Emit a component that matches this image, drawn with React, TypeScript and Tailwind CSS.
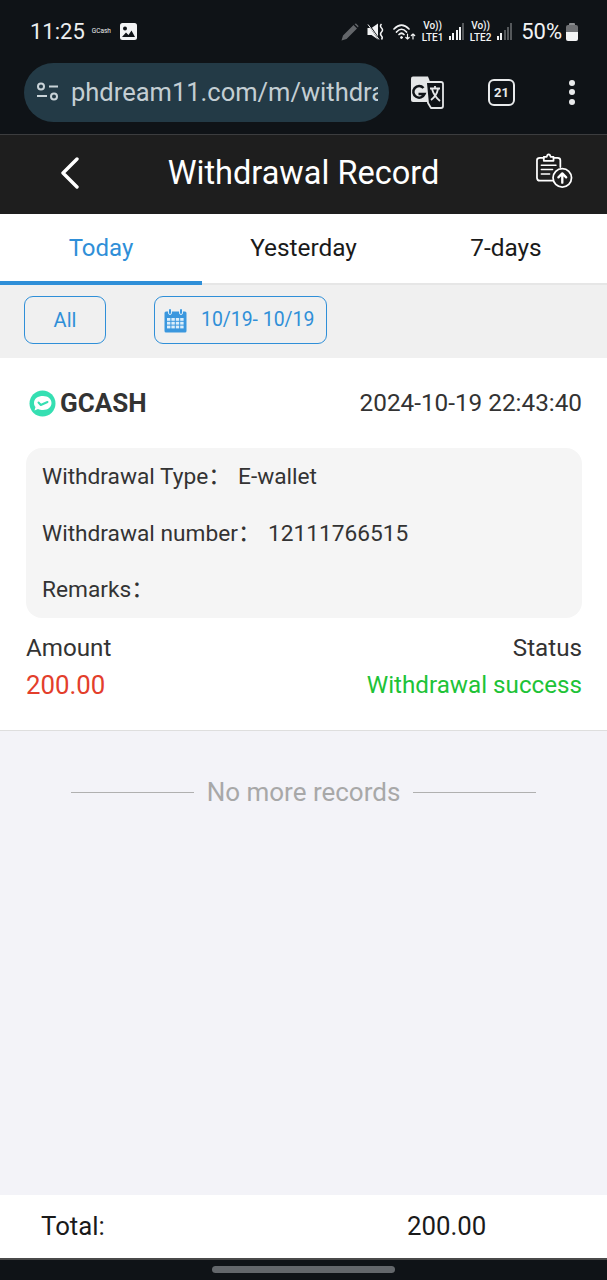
function SignalBars({ level }: { level: number }) {
  const heights = [4, 7, 10, 13, 17];
  return (
    <div className="flex items-end gap-[1.25px] h-[17px]">
      {heights.map((h, i) => (
        <div
          key={i}
          className="w-[2px]"
          style={{ height: h, backgroundColor: i < level ? '#f2f3f4' : '#55585b' }}
        ></div>
      ))}
    </div>
  );
}

function SimTag({ label }: { label: string }) {
  return (
    <div className="flex flex-col items-center text-[10px] leading-[11.5px] font-medium w-[23px] whitespace-nowrap">
      <span>Vo))</span>
      <span>{label}</span>
    </div>
  );
}

function StatusIcons() {
  return (
    <div className="flex items-center text-[#f2f3f4]">
      <svg width="18" height="18" viewBox="0 0 18 18" className="text-[#63666a]">
        <path d="M0.5 17.5 L2 12.5 L12.5 2 L16 5.5 L5.5 16 Z M13.5 1 L15 0.5 L17.5 3 L17 4.5 Z" fill="currentColor" />
      </svg>
      <svg width="18" height="17" viewBox="0 0 18 17" className="ml-[8px]">
        <path d="M0.5 5 H4.5 L11 0.5 V16.5 L4.5 12 H0.5 Z" fill="currentColor" />
        <path d="M1 0.5 L11.5 15.5" stroke="#0f1317" strokeWidth="1.6" />
        <path d="M1 1.5 L12 16.5" stroke="currentColor" strokeWidth="1" />
        <path d="M14.5 1 Q12.5 3 14.5 5 Q16.5 7 14.5 9 Q12.5 11 14.5 13 Q16 14.5 14.5 16.5" stroke="currentColor" strokeWidth="1.5" fill="none" />
      </svg>
      <svg width="23" height="17" viewBox="0 0 23 17" fill="none" stroke="currentColor" strokeLinecap="round" className="ml-[8px]">
        <path d="M1 6 Q8.5 -1.5 16 6" strokeWidth="1.7" />
        <path d="M3.5 9 Q8.5 3.5 13.5 9" strokeWidth="1.7" />
        <path d="M6 11.5 Q8.5 9 11 11.5" strokeWidth="1.7" />
        <circle cx="8.5" cy="14.5" r="1" fill="currentColor" />
        <path d="M14.5 11 V16 M12.8 14.5 L14.5 16 L16.2 14.5" strokeWidth="1.2" />
        <path d="M20 16 V11 M18.3 12.5 L20 11 L21.7 12.5" strokeWidth="1.2" />
      </svg>
      <div className="ml-[5px]"><SimTag label="LTE1" /></div>
      <div className="ml-[5px]"><SignalBars level={4} /></div>
      <div className="ml-[5px]"><SimTag label="LTE2" /></div>
      <div className="ml-[5px]"><SignalBars level={2} /></div>
      <span className="text-[22px] leading-none ml-[9px]">50%</span>
      <div className="flex flex-col items-center ml-[4px]">
        <div className="w-[6px] h-[2px] bg-[#8b8d90] rounded-t-[1px]"></div>
        <div className="w-[12px] h-[16px] rounded-[2px] overflow-hidden flex flex-col">
          <div className="h-[7px] bg-[#6f7174]"></div>
          <div className="h-[9px] bg-[#f2f3f4]"></div>
        </div>
      </div>
    </div>
  );
}

function TranslateIcon() {
  return (
    <svg width="34" height="33" viewBox="0 0 34 33">
      <path d="M3 0.5 H18 L28 26 H3 Q1 26 1 24 V2.5 Q1 0.5 3 0.5 Z" fill="#e4e6e7" />
      <path d="M18 27 L21 32 H31 Q33 32 33 30 V8 Q33 6 31 6 H16 Z" fill="#0f1317" stroke="#e4e6e7" strokeWidth="1.8" strokeLinejoin="round" />
      <path d="M13.5 12 A5.8 5.8 0 1 0 14.5 18 H8.5" fill="none" stroke="#0f1317" strokeWidth="2.5" />
      <path d="M20 12.5 H30 M25 10 V12.5 M22 13 Q24 20 30 25 M28 13 Q26.5 20 21 24" fill="none" stroke="#e4e6e7" strokeWidth="1.8" />
    </svg>
  );
}

function ClipboardUploadIcon() {
  return (
    <svg width="37" height="36" viewBox="0 0 38 36" fill="none" stroke="white" strokeWidth="1.8" strokeLinecap="round" strokeLinejoin="round">
      <path d="M17 28 H4 Q1 28 1 25 V7 Q1 4.5 4 4.5 H8" />
      <path d="M18 4.5 H22 Q25 4.5 25 7 V14" />
      <path d="M8 3.5 H11 Q11.5 0.8 13 0.8 Q14.5 0.8 15 3.5 H18 V7.5 H8 Z" />
      <path d="M5.5 12 H20.5 M5.5 16.5 H17 M5.5 21 H14" strokeWidth="1.6" />
      <circle cx="27" cy="25" r="9.5" strokeWidth="1.8" />
      <path d="M27 30 V20.5 M23 24.5 L27 20.5 L31 24.5" strokeWidth="2.4" />
    </svg>
  );
}

function CalendarIcon() {
  const cols = [3, 7.4, 11.8, 16.2];
  const rows = [10, 13.8, 17.6];
  return (
    <svg width="23" height="25" viewBox="0 0 23 25" fill="#3a97de">
      <path d="M2 3.5 H21 Q22.5 3.5 22.5 5 V23 Q22.5 24.5 21 24.5 H2 Q0.5 24.5 0.5 23 V5 Q0.5 3.5 2 3.5 Z" />
      <rect x="4.5" y="0.5" width="3" height="6" rx="1.5" stroke="white" strokeWidth="0.8" />
      <rect x="15.5" y="0.5" width="3" height="6" rx="1.5" stroke="white" strokeWidth="0.8" />
      <g fill="#dceefa">
        {rows.map((y) =>
          cols.map((x) => <rect key={`${x}-${y}`} x={x} y={y} width="3.4" height="2.8" />)
        )}
      </g>
    </svg>
  );
}

function GcashLogo() {
  return (
    <svg width="27" height="27" viewBox="0 0 27 27">
      <circle cx="13.5" cy="13.5" r="13" fill="#35dfb2" />
      <path d="M5 13 C5 8.5 9 6 14 6 C19 6 22.5 8.8 22.5 13 C22.5 17.2 19 20 14 20 C12 20 10.5 19.7 9 19 L5.5 20.5 L6.5 17 C5.5 16 5 14.6 5 13 Z" fill="white" />
      <path d="M9.5 12.5 L11.8 15 L18.5 12" stroke="#35dfb2" strokeWidth="2" fill="none" strokeLinecap="round" strokeLinejoin="round" />
    </svg>
  );
}

function Colon() {
  return <span className="font-['Noto_Sans_CJK_SC',sans-serif] leading-none">：</span>;
}

export default function App() {
  return (
    <div className="w-[607px] h-[1280px] flex flex-col bg-[#f3f3f8] overflow-hidden font-['Roboto',sans-serif]">
      {/* android status bar + chrome url bar */}
      <div className="bg-[#0f1317] h-[135px] shrink-0 flex flex-col border-b border-[#3c3d3f]">
        <div className="h-[62px] flex items-center justify-between pl-[30px] pr-[29px] pt-[1px]">
          <div className="flex items-center text-[#eceeef]">
            <span className="text-[22px] leading-none">11:25</span>
            <span className="text-[6.5px] leading-none ml-[7px]">GCash</span>
            <svg width="17" height="17" viewBox="0 0 17 17" className="ml-[9px]">
              <rect width="17" height="17" rx="2.5" fill="#f2f3f4" />
              <circle cx="5" cy="5.5" r="2" fill="#0f1317" />
              <path d="M2 14 L6 9.5 L8.5 12 L11.5 7.5 L15 14 Z" fill="#0f1317" />
            </svg>
          </div>
          <StatusIcons />
        </div>
        <div className="flex items-center h-[60px] pl-[24px]">
          <div className="w-[365px] h-[59px] rounded-full bg-[#233a46] flex items-center pl-[12px]">
            <svg width="23" height="20" viewBox="0 0 23 20" fill="none" stroke="#c9d3d8" strokeWidth="2" className="shrink-0">
              <circle cx="5" cy="4.5" r="3" />
              <path d="M13 4.5 H22 M1 14 H11" />
              <circle cx="18" cy="14.5" r="3" />
            </svg>
            <span className="ml-[12px] w-[307px] overflow-hidden text-[25.5px] leading-[30px] text-[#c3ced3] whitespace-nowrap">phdream11.com/m/withdra</span>
          </div>
          <div className="ml-[21px]"><TranslateIcon /></div>
          <div className="ml-[44px] w-[27px] h-[27px] rounded-[6px] border-[2.5px] border-[#e8eaeb] flex items-center justify-center text-[13px] font-bold text-[#e8eaeb] leading-none">21</div>
          <div className="ml-[54px] flex flex-col gap-[3.5px]">
            <div className="w-[6px] h-[6px] rounded-full bg-[#e8eaeb]"></div>
            <div className="w-[6px] h-[6px] rounded-full bg-[#e8eaeb]"></div>
            <div className="w-[6px] h-[6px] rounded-full bg-[#e8eaeb]"></div>
          </div>
        </div>
      </div>

      {/* page header */}
      <div className="bg-[#1e1e1e] h-[79px] shrink-0 flex items-center pb-[3px]">
        <div className="w-[130px] pl-[60px]">
          <svg width="20" height="32" viewBox="0 0 20 32" fill="none" stroke="white" strokeWidth="3.4" strokeLinecap="round" strokeLinejoin="round">
            <path d="M17 2 L3 16 L17 30" />
          </svg>
        </div>
        <span className="flex-1 text-center text-[32.5px] text-white leading-none whitespace-nowrap">Withdrawal Record</span>
        <div className="w-[130px] pl-[59px] -mt-[4px]">
          <ClipboardUploadIcon />
        </div>
      </div>

      {/* tabs */}
      <div className="bg-white h-[71px] shrink-0 flex border-b-[2px] border-[#e6e6e6]">
        <div className="w-[202px] flex items-center justify-center text-[24px] text-[#2f8fd8] border-b-[4px] border-[#2f8fd8] -mb-[2px]">Today</div>
        <div className="w-[202px] flex items-center justify-center text-[24.4px] text-[#1a1a1a] pb-[1px] pl-[1px]">Yesterday</div>
        <div className="w-[203px] flex items-center justify-center text-[24.4px] text-[#1a1a1a] pb-[1px] pl-[1px]">7-days</div>
      </div>

      {/* filters */}
      <div className="bg-[#f0f0f0] h-[73px] shrink-0 flex items-center pl-[24px] gap-[48px] pb-[3px]">
        <div className="w-[82px] h-[48px] rounded-[9px] border border-[#2f8fd8] flex items-center justify-center text-[20px] text-[#2f8fd8]">All</div>
        <div className="w-[173px] h-[48px] rounded-[9px] border border-[#2f8fd8] flex items-center pl-[9px] gap-[14px] text-[19.4px] text-[#2f8fd8]">
          <CalendarIcon />
          <span className="whitespace-nowrap">10/19- 10/19</span>
        </div>
      </div>

      {/* record card */}
      <div className="bg-white h-[373px] shrink-0 border-b border-[#dedede] pl-[26px] pr-[25px] flex flex-col">
        <div className="flex items-center justify-between h-[90px]">
          <div className="flex items-center gap-[4px] pl-[3px]">
            <GcashLogo />
            <span className="text-[26px] font-bold text-[#333333] leading-none">GCASH</span>
          </div>
          <span className="text-[24.3px] text-[#333333] leading-none">2024-10-19 22:43:40</span>
        </div>
        <div className="bg-[#f5f5f5] rounded-[16px] h-[170px] px-[16px] flex flex-col justify-between py-[14px] text-[22.7px] text-[#333333] leading-[29px]">
          <div className="flex items-baseline">
            <span className="w-[196px] whitespace-nowrap">Withdrawal Type<Colon /></span>
            <span>E-wallet</span>
          </div>
          <div className="flex items-baseline">
            <span className="w-[226px] whitespace-nowrap">Withdrawal number<Colon /></span>
            <span>12111766515</span>
          </div>
          <div>Remarks<Colon /></div>
        </div>
        <div className="flex justify-between mt-[15px] text-[24.2px] text-[#333333] leading-[30px]">
          <span>Amount</span>
          <span>Status</span>
        </div>
        <div className="flex justify-between items-center mt-[7px] leading-[30px]">
          <span className="text-[25.8px] text-[#e33e2b]">200.00</span>
          <span className="text-[24.2px] text-[#1ec337]">Withdrawal success</span>
        </div>
      </div>

      {/* end of list */}
      <div className="flex-1 px-[71px] pt-[46px]">
        <div className="flex items-center gap-[13px]">
          <div className="flex-1 h-[1px] bg-[#b0b0b0]"></div>
          <span className="text-[26px] text-[#a8a8a8] leading-[30px]">No more records</span>
          <div className="flex-1 h-[1px] bg-[#b0b0b0]"></div>
        </div>
      </div>

      {/* total bar */}
      <div className="bg-white h-[65px] shrink-0 flex items-center pl-[41px] text-[25.8px] text-[#1a1a1a] border-b-[2px] border-[#4a4a4a]">
        <span className="w-[366px]">Total:</span>
        <span>200.00</span>
      </div>

      {/* nav gesture bar */}
      <div className="bg-[#0f1317] h-[20px] shrink-0 flex items-center justify-center pb-[1px]">
        <div className="w-[183px] h-[7px] rounded-full bg-[#63676b]"></div>
      </div>
    </div>
  );
}
